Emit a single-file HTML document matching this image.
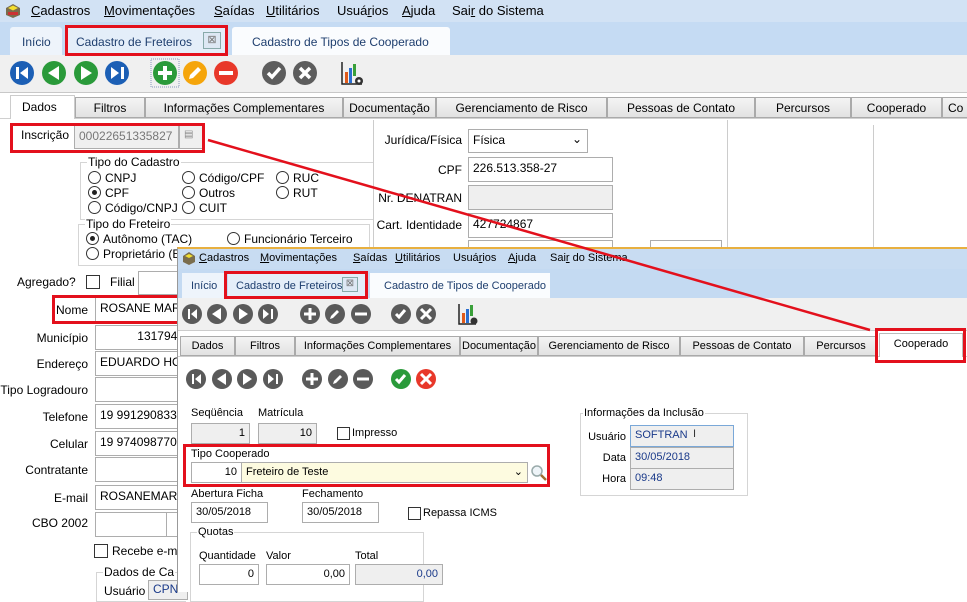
<!DOCTYPE html>
<html><head><meta charset="utf-8"><style>
*{margin:0;padding:0;box-sizing:border-box}
body{width:967px;height:592px;overflow:hidden;background:#fff;font-family:"Liberation Sans",sans-serif;font-size:12px;color:#000;position:relative}
.a{position:absolute;white-space:nowrap}
.inp{position:absolute;background:#fff;border:1px solid #adadad;padding:3px 4px;font-size:12px;overflow:hidden;white-space:nowrap}
.g{background:#efefef}
.rb{position:absolute;border:3px solid #e3101c}
.rad{position:absolute;width:13px;height:13px;border:1px solid #333;border-radius:50%;background:#fff}
.rad.on::after{content:"";position:absolute;left:3px;top:3px;width:5px;height:5px;border-radius:50%;background:#222}
.cb{position:absolute;width:14px;height:14px;border:1px solid #333;background:#fff}
.tab{position:absolute;border:1px solid #aaa;background:linear-gradient(#f4f4f4,#e2e2e2);text-align:center;font-size:12px}
.grp{position:absolute;border:1px solid #d5d5d5}
.grp>span{position:absolute;top:-8px;left:6px;background:#fff;padding:0 1px}
u{text-decoration:underline}
.o{font-size:11px}
</style></head><body>

<!-- TOP WINDOW -->
<div class="a" style="left:0;top:0;width:967px;height:22px;background:#d2e2f4"></div>
<svg class="a" style="left:4px;top:3px" width="18" height="16"><path d="M2 5 L9 1 L16 5 L16 12 L9 15 L2 12Z" fill="#7a6d4d"/><path d="M4 5 L9 2.5 L14 5 L9 7.5Z" fill="#f3df2e"/><rect x="4" y="9" width="10" height="3" fill="#c33"/></svg>
<div class="a" style="left:31px;top:3px;font-size:13px"><u>C</u>adastros</div>
<div class="a" style="left:104px;top:3px;font-size:13px"><u>M</u>ovimentações</div>
<div class="a" style="left:214px;top:3px;font-size:13px"><u>S</u>aídas</div>
<div class="a" style="left:266px;top:3px;font-size:13px"><u>U</u>tilitários</div>
<div class="a" style="left:337px;top:3px;font-size:13px">Usuá<u>r</u>ios</div>
<div class="a" style="left:402px;top:3px;font-size:13px"><u>A</u>juda</div>
<div class="a" style="left:452px;top:3px;font-size:13px">Sai<u>r</u> do Sistema</div>
<div class="a" style="left:0;top:22px;width:967px;height:33px;background:#c5dbf3"></div>
<div class="a" style="left:10px;top:27px;width:52px;height:28px;background:#eef4fb;border-radius:3px 3px 0 0;padding:8px 0 0 12px;color:#1e3e6e">Início</div>
<div class="a" style="left:66px;top:27px;width:161px;height:28px;background:#e4eef9;padding:8px 0 0 10px;color:#1e3e6e">Cadastro de Freteiros</div>
<div class="a" style="left:203px;top:32px;width:18px;height:17px;border:1px solid #8aa;background:#dde8f4;font-size:11px;text-align:center;color:#777">⊠</div>
<div class="a" style="left:232px;top:27px;width:218px;height:28px;background:#fafcfe;border-radius:3px 3px 0 0;padding:8px 0 0 20px;color:#1e3e6e">Cadastro de Tipos de Cooperado</div>
<div class="a" style="left:0;top:55px;width:967px;height:38px;background:#f0f0f0;border-bottom:1px solid #c8c8c8"></div>
<svg class="a" style="left:0;top:55px" width="380" height="38">
<g font-family="Liberation Sans" font-weight="bold">
<circle cx="22" cy="18" r="12" fill="#1c5fb5"/><rect x="16" y="12" width="3" height="12" fill="#fff"/><path d="M28 12 L20 18 L28 24Z" fill="#fff"/>
<circle cx="54" cy="18" r="12" fill="#2a9a3a"/><path d="M59 11 L48 18 L59 25Z" fill="#fff"/>
<circle cx="86" cy="18" r="12" fill="#2a9a3a"/><path d="M81 11 L92 18 L81 25Z" fill="#fff"/>
<circle cx="117" cy="18" r="12" fill="#1c5fb5"/><rect x="121" y="12" width="3" height="12" fill="#fff"/><path d="M111 12 L119 18 L111 24Z" fill="#fff"/>
<rect x="151" y="4" width="28" height="28" fill="none" stroke="#8899bb" stroke-dasharray="1 1"/>
<circle cx="165" cy="18" r="12" fill="#2a9a3a"/><rect x="158" y="16" width="14" height="4" fill="#fff"/><rect x="163" y="11" width="4" height="14" fill="#fff"/>
<circle cx="195" cy="18" r="12" fill="#f5a50b"/><path d="M189 24 L190 20 L198 12 L201 15 L193 23Z" fill="#fff"/>
<circle cx="226" cy="18" r="12" fill="#e8382a"/><rect x="219" y="16" width="14" height="4" fill="#fff"/>
<circle cx="274" cy="18" r="12" fill="#5d5d5d"/><path d="M268 18 L272 22 L280 13" stroke="#fff" stroke-width="3.5" fill="none"/>
<circle cx="305" cy="18" r="12" fill="#5d5d5d"/><path d="M300 13 L310 23 M310 13 L300 23" stroke="#fff" stroke-width="3.5"/>
<path d="M342 7 L342 29 L362 29" stroke="#222" stroke-width="1.5" fill="none"/><rect x="345" y="17" width="3" height="11" fill="#e05a1a"/><rect x="349" y="13" width="3" height="15" fill="#2a6ed0"/><rect x="353" y="9" width="3" height="12" fill="#3aa03a"/><circle cx="359" cy="26" r="4" fill="#333"/><circle cx="359" cy="26" r="1.5" fill="#fff"/>
</g></svg>
<!-- page tabs -->
<div class="a" style="left:0;top:118px;width:967px;height:1px;background:#d0d0d0"></div>
<div class="a" style="left:10px;top:95px;width:65px;height:24px;background:#fff;border:1px solid #ccc;border-bottom:none;padding:4px 0 0 11px">Dados</div>
<div class="tab" style="left:75px;top:97px;width:70px;height:21px;padding-top:3px">Filtros</div>
<div class="tab" style="left:145px;top:97px;width:198px;height:21px;padding-top:3px">Informações Complementares</div>
<div class="tab" style="left:343px;top:97px;width:93px;height:21px;padding-top:3px">Documentação</div>
<div class="tab" style="left:436px;top:97px;width:171px;height:21px;padding-top:3px">Gerenciamento de Risco</div>
<div class="tab" style="left:607px;top:97px;width:148px;height:21px;padding-top:3px">Pessoas de Contato</div>
<div class="tab" style="left:755px;top:97px;width:96px;height:21px;padding-top:3px">Percursos</div>
<div class="tab" style="left:851px;top:97px;width:91px;height:21px;padding-top:3px">Cooperado</div>
<div class="tab" style="left:942px;top:97px;width:30px;height:21px;padding:3px 0 0 5px;text-align:left">Co</div>
<!-- left content -->
<div class="a" style="left:21px;top:128px">Inscrição</div>
<div class="inp g" style="left:74px;top:125px;width:105px;height:24px;color:#777">00022651335827</div>
<div class="inp g" style="left:179px;top:125px;width:24px;height:24px;color:#888;font-size:10px">▤</div>
<div class="a" style="left:373px;top:120px;width:1px;height:130px;background:#ccc"></div>
<div class="a" style="left:727px;top:120px;width:1px;height:130px;background:#ccc"></div>
<div class="a" style="left:873px;top:125px;width:1px;height:125px;background:#ccc"></div>
<div class="grp" style="left:80px;top:162px;width:293px;height:58px;border-right:none"><span>Tipo do Cadastro</span></div>
<div class="rad" style="left:88px;top:171px"></div><div class="a" style="left:105px;top:171px">CNPJ</div>
<div class="rad on" style="left:88px;top:186px"></div><div class="a" style="left:105px;top:186px">CPF</div>
<div class="rad" style="left:88px;top:201px"></div><div class="a" style="left:105px;top:201px">Código/CNPJ</div>
<div class="rad" style="left:182px;top:171px"></div><div class="a" style="left:199px;top:171px">Código/CPF</div>
<div class="rad" style="left:182px;top:186px"></div><div class="a" style="left:199px;top:186px">Outros</div>
<div class="rad" style="left:182px;top:201px"></div><div class="a" style="left:199px;top:201px">CUIT</div>
<div class="rad" style="left:276px;top:171px"></div><div class="a" style="left:293px;top:171px">RUC</div>
<div class="rad" style="left:276px;top:186px"></div><div class="a" style="left:293px;top:186px">RUT</div>
<div class="grp" style="left:78px;top:224px;width:292px;height:42px"><span>Tipo do Freteiro</span></div>
<div class="rad on" style="left:86px;top:232px"></div><div class="a" style="left:103px;top:232px">Autônomo (TAC)</div>
<div class="rad" style="left:86px;top:247px"></div><div class="a" style="left:103px;top:247px">Proprietário (E</div>
<div class="rad" style="left:227px;top:232px"></div><div class="a" style="left:244px;top:232px">Funcionário Terceiro</div>
<div class="a" style="right:505px;top:133px">Jurídica/Física</div>
<div class="inp" style="left:468px;top:129px;width:120px;height:24px">Física<span style="position:absolute;right:5px;top:2px">⌄</span></div>
<div class="a" style="right:505px;top:163px">CPF</div>
<div class="inp" style="left:468px;top:157px;width:145px;height:25px">226.513.358-27</div>
<div class="a" style="right:505px;top:191px">Nr. DENATRAN</div>
<div class="inp g" style="left:468px;top:185px;width:145px;height:25px"></div>
<div class="a" style="right:505px;top:218px">Cart. Identidade</div>
<div class="inp" style="left:468px;top:213px;width:145px;height:25px">427724867</div>
<div class="inp" style="left:468px;top:240px;width:145px;height:10px"></div>
<div class="inp" style="left:650px;top:240px;width:72px;height:10px"></div>

<div class="a" style="left:17px;top:275px">Agregado?</div>
<div class="cb" style="left:86px;top:275px"></div>
<div class="a" style="left:110px;top:275px">Filial</div>
<div class="inp" style="left:138px;top:271px;width:50px;height:24px"></div>
<div class="a" style="right:879px;top:303px">Nome</div>
<div class="inp" style="left:95px;top:297px;width:90px;height:25px">ROSANE MAR</div>
<div class="a" style="right:879px;top:331px">Município</div>
<div class="inp" style="left:95px;top:325px;width:90px;height:25px;text-align:right;padding-right:0">1317941</div>
<div class="a" style="right:879px;top:357px">Endereço</div>
<div class="inp" style="left:95px;top:351px;width:90px;height:25px">EDUARDO HO</div>
<div class="a" style="right:879px;top:383px">Tipo Logradouro</div>
<div class="inp" style="left:95px;top:377px;width:90px;height:25px"></div>
<div class="a" style="right:879px;top:410px">Telefone</div>
<div class="inp" style="left:95px;top:404px;width:90px;height:25px">19 991290833</div>
<div class="a" style="right:879px;top:437px">Celular</div>
<div class="inp" style="left:95px;top:431px;width:90px;height:25px">19 974098770</div>
<div class="a" style="right:879px;top:463px">Contratante</div>
<div class="inp" style="left:95px;top:457px;width:90px;height:25px"></div>
<div class="a" style="right:879px;top:491px">E-mail</div>
<div class="inp" style="left:95px;top:485px;width:90px;height:25px">ROSANEMARI</div>
<div class="a" style="right:879px;top:516px">CBO 2002</div>
<div class="inp" style="left:95px;top:512px;width:72px;height:25px"></div>
<div class="inp" style="left:166px;top:512px;width:20px;height:25px"></div>
<div class="cb" style="left:94px;top:544px"></div>
<div class="a" style="left:112px;top:544px">Recebe e-m</div>
<div class="grp" style="left:96px;top:572px;width:90px;height:30px;border-right:none"><span>Dados de Ca</span></div>
<div class="a" style="left:104px;top:584px">Usuário</div>
<div class="inp g" style="left:148px;top:580px;width:40px;height:20px;color:#1a3a8a;padding-top:1px">CPN</div>

<div class="rb" style="left:10px;top:123px;width:195px;height:30px"></div>
<div class="rb" style="left:65px;top:25px;width:163px;height:31px"></div>
<div class="rb" style="left:52px;top:295px;width:130px;height:29px"></div>

<!-- OVERLAY WINDOW -->
<div class="a" style="left:177px;top:247px;width:790px;height:345px;background:#fff;border-top:2px solid #e8b040;border-left:1px solid #999"></div>
<div class="a" style="left:178px;top:249px;width:789px;height:20px;background:#c8dcf2"></div>
<svg class="a" style="left:181px;top:251px" width="16" height="15"><path d="M2 5 L8 1 L14 5 L14 11 L8 14 L2 11Z" fill="#7a6d4d"/><path d="M4 5 L8 3 L12 5 L8 7Z" fill="#f3df2e"/></svg>
<div class="a o" style="left:199px;top:252px"><u>C</u>adastros</div>
<div class="a o" style="left:260px;top:252px"><u>M</u>ovimentações</div>
<div class="a o" style="left:353px;top:252px"><u>S</u>aídas</div>
<div class="a o" style="left:395px;top:252px"><u>U</u>tilitários</div>
<div class="a o" style="left:453px;top:252px">Usuá<u>r</u>ios</div>
<div class="a o" style="left:508px;top:252px"><u>A</u>juda</div>
<div class="a o" style="left:550px;top:252px">Sai<u>r</u> do Sistema</div>
<div class="a" style="left:178px;top:269px;width:789px;height:29px;background:#c4daf2"></div>
<div class="a o" style="left:182px;top:273px;width:42px;height:25px;background:#eef4fb;padding:7px 0 0 9px;color:#1e3e6e">Início</div>
<div class="a o" style="left:228px;top:273px;width:137px;height:25px;background:#e4eef9;padding:7px 0 0 8px;color:#1e3e6e">Cadastro de Freteiros</div>
<div class="a" style="left:342px;top:277px;width:16px;height:15px;border:1px solid #8aa;background:#dde8f4;font-size:10px;text-align:center;color:#777">⊠</div>
<div class="a o" style="left:370px;top:273px;width:180px;height:25px;background:#fafcfe;padding:7px 0 0 14px;color:#1e3e6e">Cadastro de Tipos de Cooperado</div>
<div class="a" style="left:178px;top:298px;width:789px;height:33px;background:#f0f0f0;border-bottom:1px solid #ccc"></div>
<svg class="a" style="left:178px;top:298px" width="300" height="95">
<g fill="#5a5a5a">
<circle cx="14" cy="16" r="10"/><circle cx="39" cy="16" r="10"/><circle cx="65" cy="16" r="10"/><circle cx="90" cy="16" r="10"/>
<circle cx="132" cy="16" r="10"/><circle cx="157" cy="16" r="10"/><circle cx="183" cy="16" r="10"/>
<circle cx="223" cy="16" r="10"/><circle cx="248" cy="16" r="10"/>
<circle cx="18" cy="81" r="10"/><circle cx="44" cy="81" r="10"/><circle cx="69" cy="81" r="10"/><circle cx="95" cy="81" r="10"/>
<circle cx="134" cy="81" r="10"/><circle cx="160" cy="81" r="10"/><circle cx="185" cy="81" r="10"/>
</g>
<circle cx="223" cy="81" r="10" fill="#2a9a3a"/><circle cx="248" cy="81" r="10" fill="#e8382a"/>
<g fill="#fff" stroke="#fff">
<path d="M10 11h2v10h-2zM19 11l-6 5 6 5z" stroke="none"/><path d="M43 10l-9 6 9 6z" stroke="none"/><path d="M61 10l9 6-9 6z" stroke="none"/><path d="M93 11h2v10h-2zM85 11l6 5-6 5z" stroke="none"/>
<path d="M126 16h12M132 10v12" stroke-width="3" fill="none"/><path d="M152 21l1-3 6-6 2 2-6 6z" stroke="none"/><path d="M177 16h12" stroke-width="3"/>
<path d="M218 16l3 3 6-7M243 11l10 10M253 11l-10 10" stroke-width="3" fill="none"/>
<path d="M14 76h2v10h-2zM23 76l-6 5 6 5z" stroke="none"/><path d="M48 75l-9 6 9 6z" stroke="none"/><path d="M65 75l9 6-9 6z" stroke="none"/><path d="M98 76h2v10h-2zM90 76l6 5-6 5z" stroke="none"/>
<path d="M128 81h12M134 75v12" stroke-width="3" fill="none"/><path d="M155 86l1-3 6-6 2 2-6 6z" stroke="none"/><path d="M179 81h12" stroke-width="3"/>
<path d="M218 81l3 3 6-7M243 76l10 10M253 76l-10 10" stroke-width="3" fill="none"/>
</g>
<path d="M281 6v20h17" stroke="#222" stroke-width="1.5" fill="none"/><rect x="284" y="15" width="3" height="10" fill="#e05a1a"/><rect x="288" y="11" width="3" height="14" fill="#2a6ed0"/><rect x="292" y="7" width="3" height="11" fill="#3aa03a"/><circle cx="296" cy="23" r="3.5" fill="#333"/>
</svg>
<div class="a" style="left:178px;top:356px;width:789px;height:1px;background:#ccc"></div>
<div class="tab o" style="left:180px;top:336px;width:55px;height:20px;padding-top:3px">Dados</div>
<div class="tab o" style="left:235px;top:336px;width:60px;height:20px;padding-top:3px">Filtros</div>
<div class="tab o" style="left:295px;top:336px;width:165px;height:20px;padding-top:3px">Informações Complementares</div>
<div class="tab o" style="left:460px;top:336px;width:78px;height:20px;padding-top:3px">Documentação</div>
<div class="tab o" style="left:538px;top:336px;width:142px;height:20px;padding-top:3px">Gerenciamento de Risco</div>
<div class="tab o" style="left:680px;top:336px;width:124px;height:20px;padding-top:3px">Pessoas de Contato</div>
<div class="tab o" style="left:804px;top:336px;width:74px;height:20px;padding-top:3px">Percursos</div>
<div class="a o" style="left:879px;top:333px;width:84px;height:24px;background:#fff;border:1px solid #bbb;border-bottom:none;text-align:center;padding-top:4px">Cooperado</div>

<div class="a o" style="left:191px;top:407px">Seqüência</div>
<div class="a o" style="left:258px;top:407px">Matrícula</div>
<div class="inp g o" style="left:191px;top:423px;width:59px;height:21px;text-align:right;padding-top:3px">1</div>
<div class="inp g o" style="left:258px;top:423px;width:59px;height:21px;text-align:right;padding-top:3px">10</div>
<div class="cb" style="left:337px;top:427px;width:13px;height:13px"></div>
<div class="a o" style="left:352px;top:427px">Impresso</div>
<div class="a o" style="left:191px;top:448px">Tipo Cooperado</div>
<div class="inp o" style="left:191px;top:462px;width:51px;height:21px;text-align:right;padding-top:3px">10</div>
<div class="inp o" style="left:241px;top:462px;width:287px;height:21px;background:#fdfbe0;padding-top:3px">Freteiro de Teste<span style="position:absolute;right:4px;top:2px">⌄</span></div>
<svg class="a" style="left:529px;top:463px" width="20" height="20"><circle cx="8" cy="8" r="5" fill="#eef4f8" stroke="#9aa" stroke-width="1.5"/><path d="M12 12l5 5" stroke="#a07030" stroke-width="2.5"/></svg>
<div class="a o" style="left:191px;top:488px">Abertura Ficha</div>
<div class="a o" style="left:302px;top:488px">Fechamento</div>
<div class="inp o" style="left:191px;top:502px;width:77px;height:21px;padding-top:3px">30/05/2018</div>
<div class="inp o" style="left:302px;top:502px;width:77px;height:21px;padding-top:3px">30/05/2018</div>
<div class="cb" style="left:408px;top:507px;width:13px;height:13px"></div>
<div class="a o" style="left:423px;top:507px">Repassa ICMS</div>
<div class="grp" style="left:190px;top:532px;width:234px;height:70px"><span class="o" style="top:-7px">Quotas</span></div>
<div class="a o" style="left:199px;top:550px">Quantidade</div>
<div class="a o" style="left:266px;top:550px">Valor</div>
<div class="a o" style="left:355px;top:550px">Total</div>
<div class="inp o" style="left:199px;top:564px;width:60px;height:21px;text-align:right;padding-top:3px">0</div>
<div class="inp o" style="left:266px;top:564px;width:84px;height:21px;text-align:right;padding-top:3px">0,00</div>
<div class="inp g o" style="left:355px;top:564px;width:88px;height:21px;text-align:right;padding-top:3px;color:#1a3a8a">0,00</div>
<div class="grp" style="left:580px;top:413px;width:168px;height:83px"><span class="o" style="top:-7px;left:2px">Informações da Inclusão</span></div>
<div class="a o" style="right:341px;top:431px">Usuário</div>
<div class="a o" style="right:341px;top:452px">Data</div>
<div class="a o" style="right:341px;top:473px">Hora</div>
<div class="inp g o" style="left:630px;top:425px;width:104px;height:22px;color:#1a3a8a;border-color:#7aa8d8;padding-top:3px">SOFTRAN<span style="position:absolute;left:62px;top:2px;color:#333">I</span></div>
<div class="inp g o" style="left:630px;top:447px;width:104px;height:22px;color:#1a3a8a;padding-top:3px">30/05/2018</div>
<div class="inp g o" style="left:630px;top:468px;width:104px;height:22px;color:#1a3a8a;padding-top:3px">09:48</div>

<div class="rb" style="left:224px;top:271px;width:144px;height:28px"></div>
<div class="rb" style="left:875px;top:328px;width:91px;height:35px"></div>
<div class="rb" style="left:183px;top:444px;width:367px;height:43px"></div>

<svg class="a" style="left:0;top:0" width="967" height="592"><path d="M208 140 L870 330" stroke="#e3101c" stroke-width="2.5"/></svg>
</body></html>
